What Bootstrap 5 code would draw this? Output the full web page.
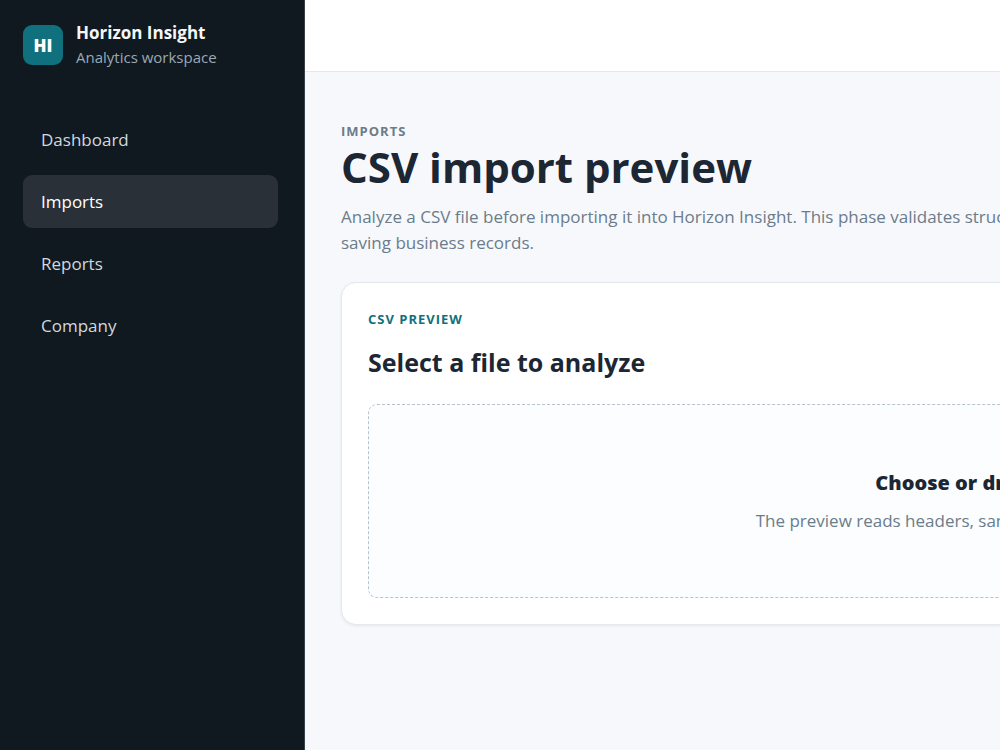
<!DOCTYPE html>
<html lang="en">
<head>
<meta charset="utf-8">
<meta name="viewport" content="width=device-width, initial-scale=1">
<title>Horizon Insight</title>
<link href="https://cdn.jsdelivr.net/npm/bootstrap@5.3.0/dist/css/bootstrap.min.css" rel="stylesheet">
<style>
:root { --ink: #1c2733; --muted: #6b7c8a; --teal: #11707e; --line: #e4e8ee; }
body { font-family: "Segoe UI", "Open Sans", sans-serif; font-size: 17px; line-height: 26px; color: var(--ink); background: #f7f8fc; }
.sidebar { width: 305px; padding: 20px 26px 20px 23px; background: #111920; border-right: 1px solid #3a4249; }
.brand { gap: 13px; margin-bottom: 43px; line-height: 25px; }
.brand-logo { width: 40px; height: 40px; border-radius: 9px; background: var(--teal); color: #fff; font-size: 17px; font-weight: 800; }
.brand-name { color: #f4f6f8; font-size: 17px; font-weight: 700; }
.brand-sub { color: #9ba8b5; font-size: 15px; }
.side-nav { gap: 9px; }
.side-nav .nav-link { padding: 13px 18px; line-height: 27px; border-radius: 9px; color: #d0d8df; }
.side-nav .nav-link.active { background: #2a3037; color: #fff; }
.topbar { height: 72px; background: #fff; border-bottom: 1px solid var(--line); }
.workspace { min-width: 0; }
.page-body { width: max-content; padding: 49px 36px; }
.eyebrow { font-size: 13px; line-height: 20px; font-weight: 700; letter-spacing: 1px; color: var(--muted); }
.eyebrow-teal { color: var(--teal); }
.page-title { margin-bottom: 11px; font-size: 42px; line-height: 52px; font-weight: 700; }
.soft { color: var(--muted); }
.panel { width: 1306px; margin-top: 26px; padding: 26px; border-color: var(--line); border-radius: 15px; box-shadow: 0 1px 3px rgba(28,39,51,.08); }
.panel-title { margin: 16px 0 25px; font-size: 25px; line-height: 34px; font-weight: 700; }
.dropzone { padding: 65px 24px 63px; border: 1px dashed #b6c2cc; border-radius: 9px; background: #fbfdfe; gap: 12px; }
.drop-title { font-size: 20px; font-weight: 800; }
</style>
</head>
<body>
<div class="d-flex min-vh-100 overflow-hidden">
  <aside class="sidebar flex-shrink-0">
    <div class="brand d-flex align-items-center">
      <div class="brand-logo d-flex align-items-center justify-content-center">HI</div>
      <div>
        <div class="brand-name">Horizon Insight</div>
        <div class="brand-sub">Analytics workspace</div>
      </div>
    </div>
    <nav class="side-nav nav flex-column" aria-label="Main">
      <a class="nav-link" href="#">Dashboard</a>
      <a class="nav-link active" href="#" aria-current="page">Imports</a>
      <a class="nav-link" href="#">Reports</a>
      <a class="nav-link" href="#">Company</a>
    </nav>
  </aside>
  <div class="workspace flex-grow-1">
    <header class="topbar"></header>
    <main class="page-body">
      <div class="eyebrow">IMPORTS</div>
      <h1 class="page-title">CSV import preview</h1>
      <p class="soft mb-0">Analyze a CSV file before importing it into Horizon Insight. This phase validates structure without<br>saving business records.</p>
      <section class="panel card">
        <div class="eyebrow eyebrow-teal">CSV PREVIEW</div>
        <h2 class="panel-title">Select a file to analyze</h2>
        <div class="dropzone d-flex flex-column align-items-center">
          <div class="drop-title">Choose or drop CSV file</div>
          <div class="soft">The preview reads headers, sample rows, and file validation.</div>
        </div>
      </section>
    </main>
  </div>
</div>
<script src="https://cdn.jsdelivr.net/npm/bootstrap@5.3.0/dist/js/bootstrap.bundle.min.js"></script>
</body>
</html>
